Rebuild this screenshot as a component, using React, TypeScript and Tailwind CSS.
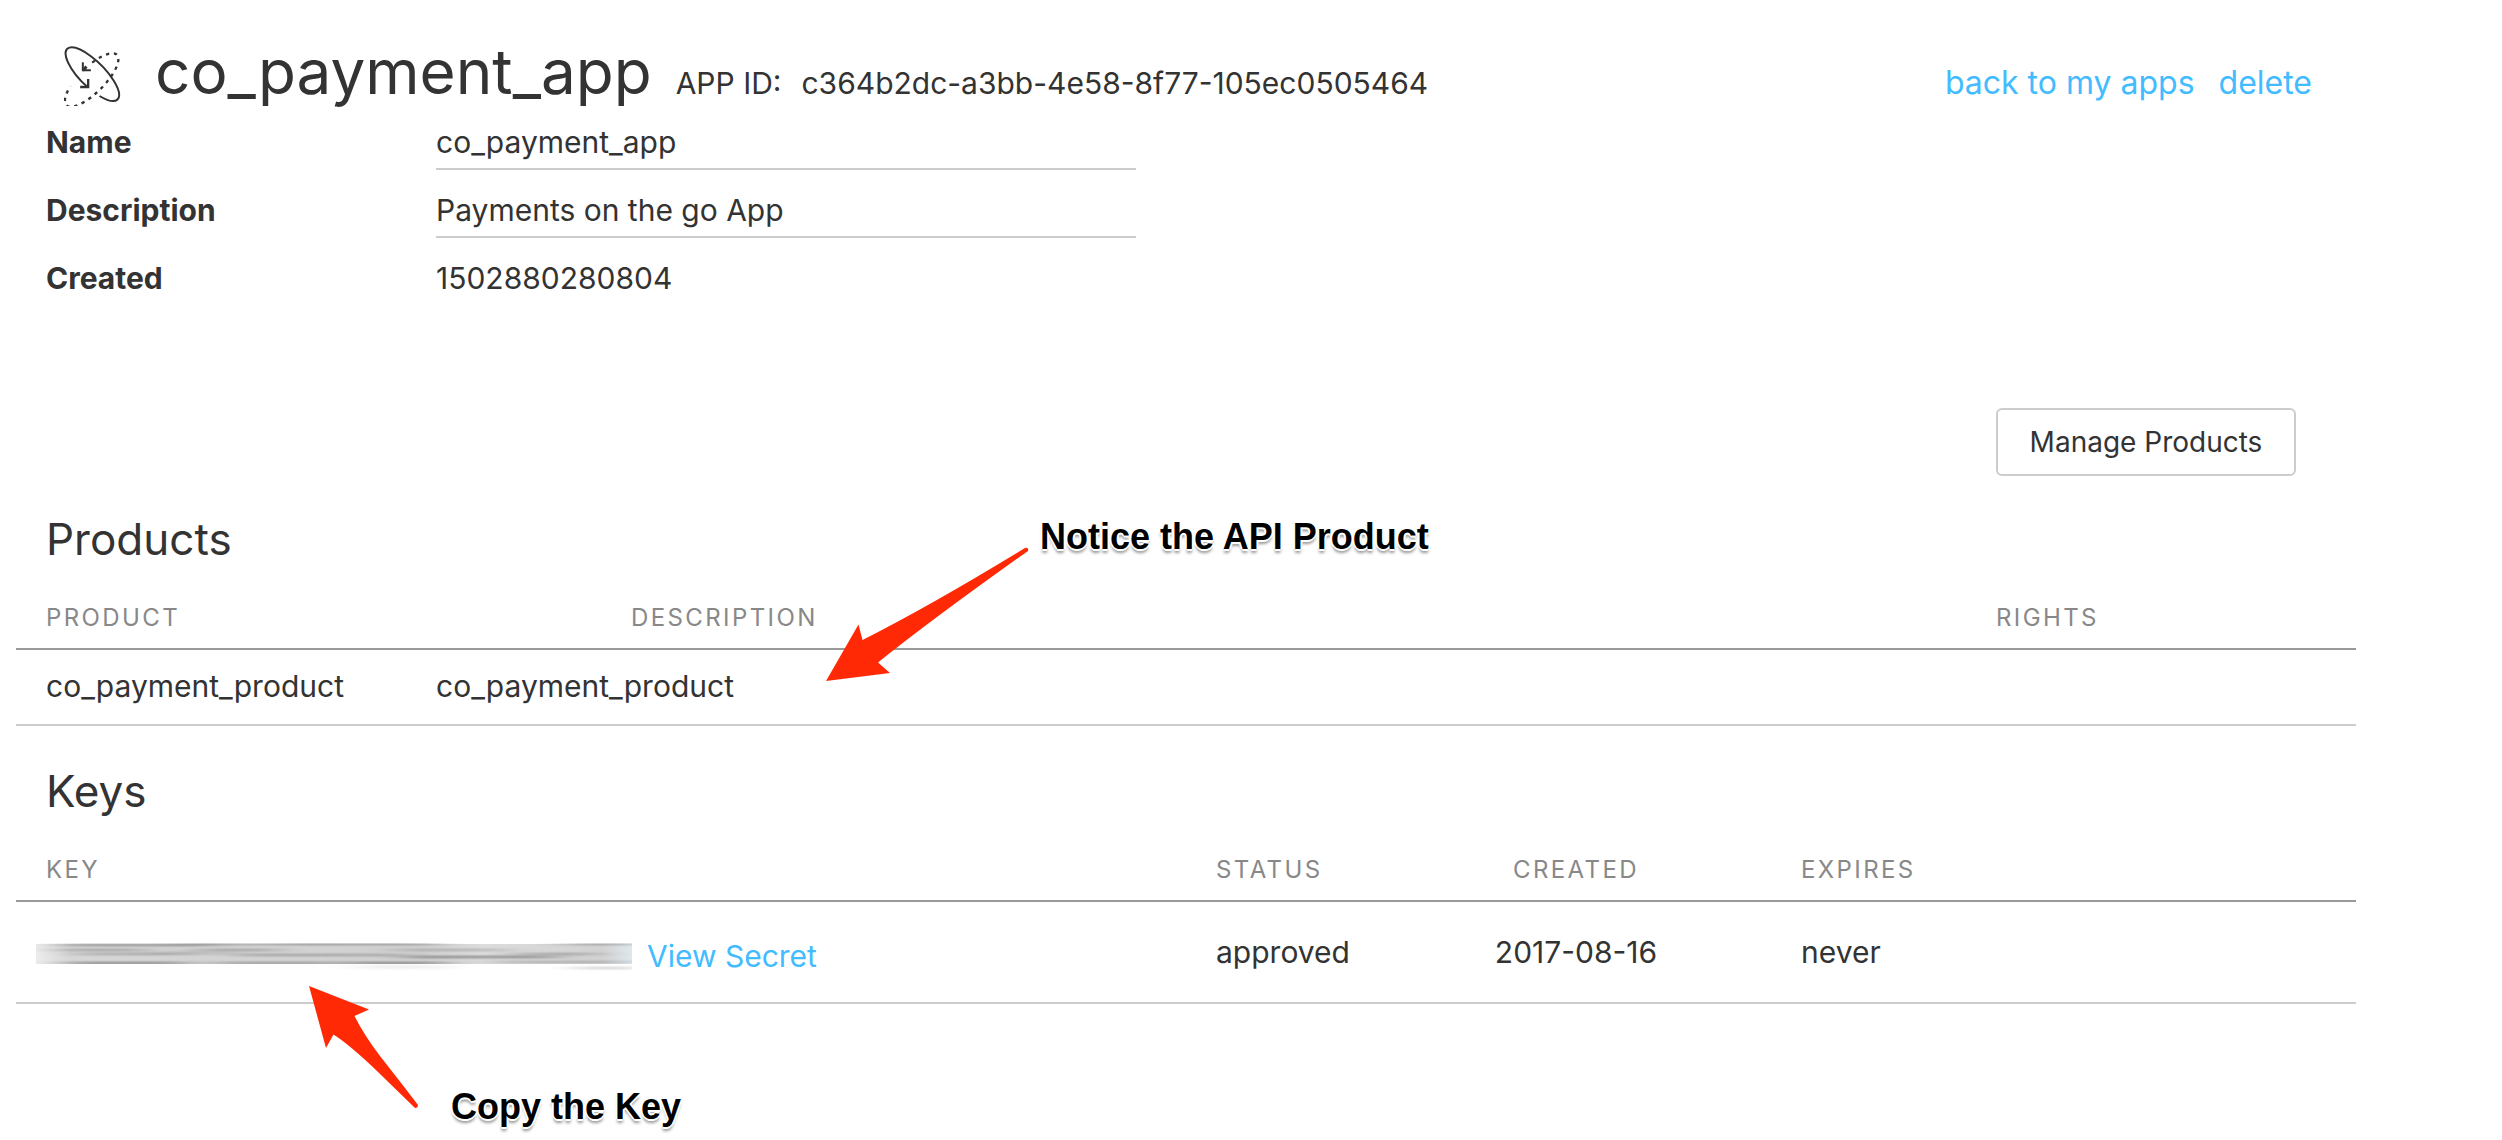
import React from "react";

function OrbitIcon() {
  return (
    <svg viewBox="66 48 182 180" className="mt-1 h-[60px] w-[61px] shrink-0 self-start" fill="none" stroke="#333" aria-hidden="true">
      <path d="M137 172 A107 38 45 1 1 172 198" strokeWidth="6" />
      <path d="M150 98 A107 38 -45 1 1 85 168" strokeWidth="7" strokeDasharray="10 14" />
      <path d="M122 97 V121 H146" strokeWidth="6" />
      <path d="M122 121 L133 110" strokeWidth="9" />
      <path d="M138 147 V171 H114" strokeWidth="7" />
    </svg>
  );
}

// x, y, width, opacity
const streaks = [
  [25, 8, 150, 0.5], [150, 7, 120, 0.35], [260, 7, 140, 0.45], [530, 7, 70, 0.4],
  [20, 13, 90, 0.4], [160, 13, 80, 0.4], [360, 13, 110, 0.3],
  [40, 17, 110, 0.35], [200, 18, 110, 0.4], [310, 18, 60, 0.35], [480, 17, 80, 0.4],
  [120, 16, 80, 0.2], [370, 20, 150, 0.6],
  [30, 26, 120, 0.6], [180, 26, 120, 0.45], [310, 26, 100, 0.6], [460, 25, 130, 0.3],
];

function SmudgedKey() {
  return (
    <svg viewBox="0 0 596 40" className="-my-2 -ml-2.5 h-10 w-[596px] shrink-0" role="img" aria-label="Hidden key">
      <defs>
        <linearGradient id="band" x1="0" x2="1">
          <stop offset="0" stopColor="#ececec" />
          <stop offset="0.06" stopColor="#d6d6d6" />
          <stop offset="0.65" stopColor="#d0d0d0" />
          <stop offset="0.75" stopColor="#dcdcdc" />
          <stop offset="0.95" stopColor="#d2d2d2" />
          <stop offset="1" stopColor="#dfe7ec" />
        </linearGradient>
        <filter id="smear" x="-40%" y="-200%" width="180%" height="500%">
          <feGaussianBlur stdDeviation="18 1" />
        </filter>
        <clipPath id="edge"><rect y="7" width="596" height="21" /></clipPath>
        <clipPath id="below"><rect y="28" width="596" height="12" /></clipPath>
      </defs>
      <g clipPath="url(#edge)">
        <rect y="8" width="596" height="20" fill="url(#band)" />
        {streaks.map(([x, y, w, o], i) => (
          <rect key={i} x={x} y={y} width={w} height="2" fill="#444" opacity={o} filter="url(#smear)" />
        ))}
      </g>
      <g clipPath="url(#below)">
        <rect x="320" y="29" width="90" height="4" fill="#444" opacity="0.08" filter="url(#smear)" />
        <rect x="540" y="31" width="60" height="2" fill="#444" opacity="0.3" filter="url(#smear)" />
      </g>
    </svg>
  );
}

const note =
  "absolute whitespace-nowrap font-['Liberation_Sans',Arial,sans-serif] text-[36px] leading-10 font-bold text-black [text-shadow:2px_0_0_#fff,-2px_0_0_#fff,0_2px_0_#fff,0_-2px_0_#fff,0_4px_3px_#999]";
const thBase = "pb-[14px] text-2xl leading-8 font-normal tracking-widest text-[#888]";
const th = thBase + " pl-[30px] text-left";
const headRow = "border-b-2 border-[#999]";
const bodyRow = "border-b-2 border-[#ccc]";
const link = "text-[#42bcff]";
const label = "w-1/6 shrink-0 pl-[30px] font-bold";
const field = "ml-[30px] h-full w-[700px] border-b-2 border-[#ccc] bg-transparent pt-[14px] outline-none";

export default function App() {
  return (
    <main className="mr-[146px] ml-4 pb-[136px] font-[Inter,sans-serif] text-[30px] leading-9 text-[#333]">
      <header className="flex h-[102px] items-baseline pt-[42px] pr-11 pl-12">
        <OrbitIcon />
        <h1 className="ml-[30px] text-[62px] leading-[60px]">co_payment_app</h1>
        <p className="ml-6">
          APP ID:<span className="ml-5">c364b2dc-a3bb-4e58-8f77-105ec0505464</span>
        </p>
        <nav className="ml-auto flex gap-6 text-[32px]">
          <a href="#apps" className={link}>back to my apps</a>
          <a href="#delete" className={link}>delete</a>
        </nav>
      </header>

      <form>
        <div className="flex h-[68px] items-center">
          <label htmlFor="name" className={label + " pt-3"}>Name</label>
          <input id="name" defaultValue="co_payment_app" className={field} />
        </div>
        <div className="flex h-[68px] items-center">
          <label htmlFor="description" className={label + " pt-3"}>Description</label>
          <input id="description" defaultValue="Payments on the go App" className={field} />
        </div>
        <div className="flex h-[68px] items-center pt-3">
          <span className={label}>Created</span>
          <span className="ml-[30px]">1502880280804</span>
        </div>
        <div className="mt-[102px] flex justify-end pr-[60px]">
          <button type="button" className="h-[68px] w-[300px] rounded-md border-2 border-[#ccc] text-[28px]">
            Manage Products
          </button>
        </div>
      </form>

      <section className="relative mt-[39px]">
        <h2 className="pl-[30px] text-[44px] leading-12">Products</h2>
        <table className="mt-[39px] w-full table-fixed border-collapse">
          <colgroup>
            <col className="w-1/6" />
            <col className="w-1/12" />
            <col className="w-7/12" />
            <col className="w-1/6" />
          </colgroup>
          <thead>
            <tr className={headRow}>
              <th colSpan={2} className={th}>PRODUCT</th>
              <th className={th}>DESCRIPTION</th>
              <th className={th}>RIGHTS</th>
            </tr>
          </thead>
          <tbody>
            <tr className={bodyRow}>
              <td className="pt-[18px] pb-5 pl-[30px]">co_payment_product</td>
              <td colSpan={2} className="pt-[18px] pb-5 pl-[30px]">co_payment_product</td>
              <td />
            </tr>
          </tbody>
        </table>
        <svg viewBox="820 540 220 150" className="absolute top-[25px] left-[804px] h-[150px] w-[220px]" fill="#ff2a05" aria-hidden="true">
          <path d="M826 681 L858.500 624.500 L862.500 640 Q930 606 1025 548 Q1029 547 1028 551 Q935 617 878 662.500 L890 673 Z" />
        </svg>
        <p className={note + " top-0.5 left-[1024px]"}>Notice the API Product</p>
      </section>

      <section className="relative mt-[41px]">
        <h2 className="pl-[30px] text-[44px] leading-12">Keys</h2>
        <table className="mt-[39px] w-full table-fixed border-collapse">
          <colgroup>
            <col className="w-1/2" />
            <col className="w-1/12" />
            <col className="w-1/6" />
            <col className="w-1/4" />
          </colgroup>
          <thead>
            <tr className={headRow}>
              <th className={th}>KEY</th>
              <th className={th}>STATUS</th>
              <th className={thBase + " text-center"}>CREATED</th>
              <th className={th}>EXPIRES</th>
            </tr>
          </thead>
          <tbody>
            <tr className={bodyRow}>
              <td className="pt-9 pb-7 pl-[30px]">
                <div className="flex items-center gap-[15px]">
                  <SmudgedKey />
                  <a href="#secret" className={link}>View Secret</a>
                </div>
              </td>
              <td className="pl-[30px]">approved</td>
              <td className="text-center">2017-08-16</td>
              <td className="pl-[30px]">never</td>
            </tr>
          </tbody>
        </table>
        <svg viewBox="300 980 130 130" className="absolute top-[214px] left-[284px] h-[130px] w-[130px]" fill="#ff2a05" aria-hidden="true">
          <path d="M309 985 L369 1008.500 L354.500 1015 Q364 1034 380 1055 L405 1087 L418 1104 Q418 1107 415 1107 L378 1071 Q350 1044 333.500 1033.500 L326 1047 Z" />
        </svg>
        <p className={note + " top-[320px] left-[435px]"}>Copy the Key</p>
      </section>
    </main>
  );
}
